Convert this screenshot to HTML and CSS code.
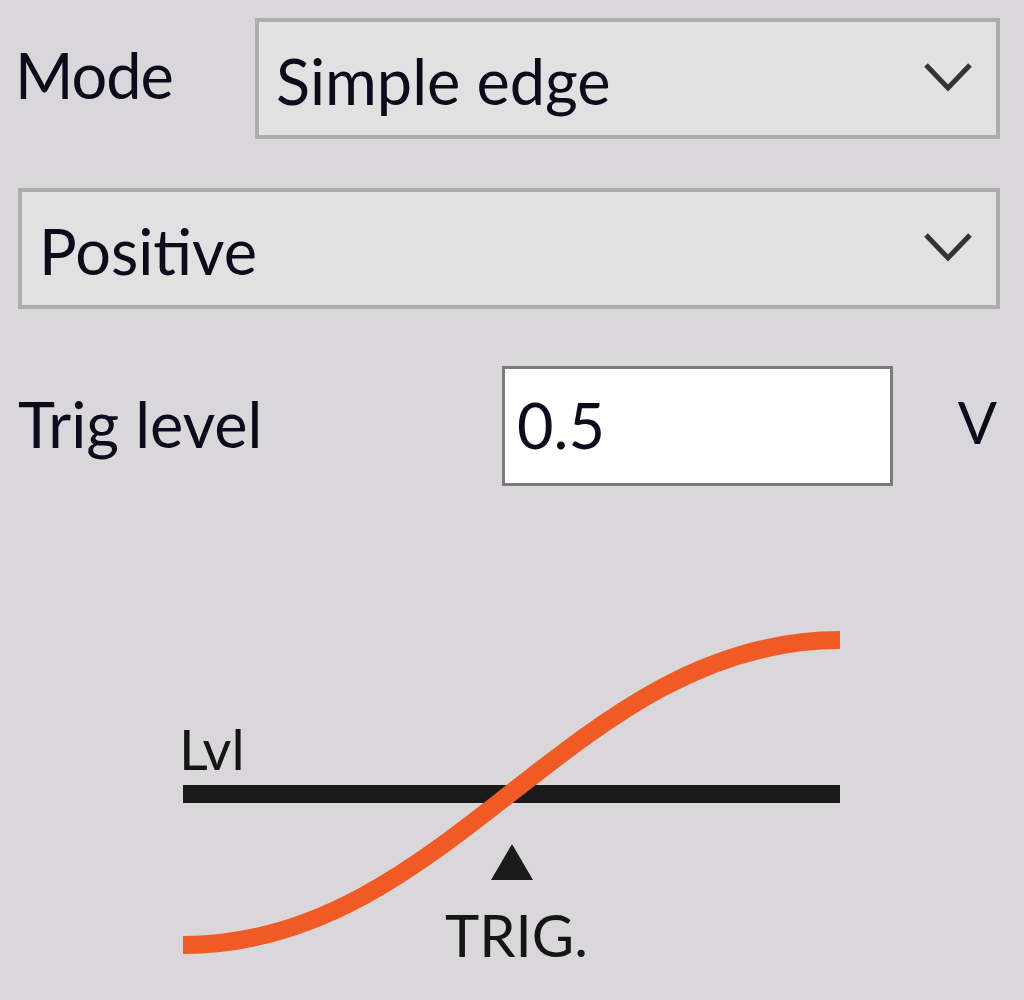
FILE: index.html
```html
<!DOCTYPE html>
<html>
<head>
<meta charset="utf-8">
<link rel="stylesheet" href="styles.css">
</head>
<body>
<div class="panel">
  <div class="row row-mode">
    <span class="label label-mode">Mode</span>
    <div class="combo combo-mode">
      <span class="combo-text">Simple edge</span>
      <svg class="chev" width="48" height="30" viewBox="0 0 48 30"><path d="M2 3 L24 26 L46 3" fill="none" stroke="#333" stroke-width="5"/></svg>
    </div>
  </div>
  <div class="combo combo-pol">
    <span class="combo-text">Positive</span>
    <svg class="chev" width="48" height="30" viewBox="0 0 48 30"><path d="M2 3 L24 26 L46 3" fill="none" stroke="#333" stroke-width="5"/></svg>
  </div>
  <div class="row row-level">
    <span class="label">Trig level</span>
    <div class="input"><span class="input-text">0.5</span></div>
    <span class="unit">V</span>
  </div>
  <svg class="diagram" width="700" height="360" viewBox="0 0 700 360">
    <line x1="18" y1="174" x2="675" y2="174" stroke="#1a1a1a" stroke-width="18"/>
    <path d="M18 325 C 285 325, 408 20, 675 20" fill="none" stroke="#f05a24" stroke-width="18"/>
    <polygon points="347,224 326,260 368,260" fill="#1a1a1a"/>
    <text class="dtext" x="14" y="150" font-size="56">Lvl</text>
    <text class="dtext" x="280" y="337" font-size="58">TRIG.</text>
  </svg>
</div>
</body>
</html>
```
FILE: styles.css
```css
html, body {
  margin: 0;
  padding: 0;
  background: #d9d7da;
}
body {
  width: 1024px;
  height: 1000px;
  overflow: hidden;
  font-family: Lato, "Open Sans", sans-serif;
  color: #0b0b1c;
}
.panel {
  display: flex;
  flex-direction: column;
  padding: 18px 24px 0 18px;
}
.row {
  display: flex;
  align-items: center;
}
.label {
  font-size: 63px;
  line-height: 1;
}
.label-mode {
  width: 237px;
  margin-left: -3px;
  padding-right: 3px;
  margin-top: -8px;
  letter-spacing: -1px;
}
.combo {
  box-sizing: border-box;
  height: 121px;
  background: #e1e1e1;
  border: 4px solid #adadad;
  display: flex;
  align-items: center;
  justify-content: space-between;
  padding: 0 24px 0 17px;
}
.combo-mode {
  flex: 1;
}
.combo-pol {
  margin-top: 49px;
}
.combo-text {
  font-size: 63px;
  line-height: 1;
  margin-top: 4px;
}
.chev {
  display: block;
  margin-top: -4px;
}
.row-level {
  margin-top: 57px;
}
.row-level .label {
  width: 484px;
  margin-top: -6px;
}
.input {
  box-sizing: border-box;
  width: 391px;
  height: 120px;
  background: #ffffff;
  border: 3px solid #7a7a7a;
  display: flex;
  align-items: center;
  padding-left: 12px;
}
.input-text {
  font-size: 63px;
  line-height: 1;
  margin-top: -4px;
}
.unit {
  margin-left: auto;
  margin-right: 3px;
  font-size: 58px;
  line-height: 1;
  margin-top: -8px;
}
.diagram {
  display: block;
  margin-top: 134px;
  margin-left: 147px;
}
.dtext {
  font-family: Lato, "Open Sans", sans-serif;
  fill: #151515;
}
```
